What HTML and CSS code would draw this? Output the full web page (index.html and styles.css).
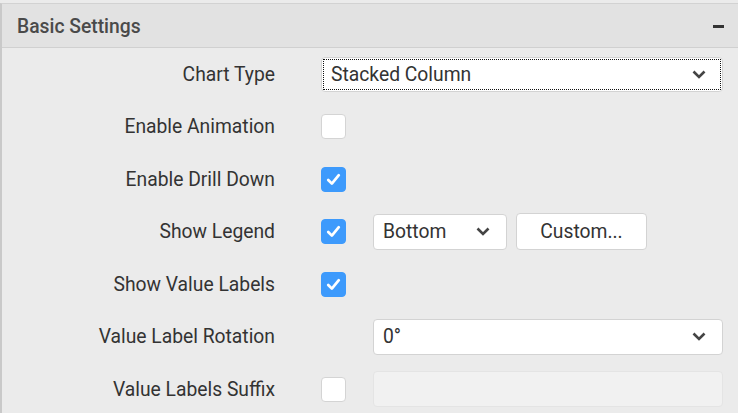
FILE: index.html
```html
<!DOCTYPE html>
<html>
<head>
<meta charset="utf-8">
<link rel="stylesheet" href="styles.css">
</head>
<body>
<div class="panel">
  <div class="panel-header">
    <span class="panel-title">Basic Settings</span>
    <span class="collapse-icon"></span>
  </div>
  <div class="panel-body">
    <div class="label">Chart Type</div>
    <div class="control">
      <div class="select select-wide focused">
        <span>Stacked Column</span>
        <svg class="chev" viewBox="0 0 14 9" width="14" height="9"><path d="M1.5 1.5 L7 7 L12.5 1.5" fill="none" stroke="#444" stroke-width="2.6"/></svg>
      </div>
    </div>

    <div class="label">Enable Animation</div>
    <div class="control"><span class="cb"></span></div>

    <div class="label">Enable Drill Down</div>
    <div class="control"><span class="cb checked"><svg viewBox="0 0 26 26" width="26" height="26"><path d="M7.5 13.5 L11.3 17.3 L18.5 8.5" fill="none" stroke="#fff" stroke-width="2.8" stroke-linecap="round" stroke-linejoin="round"/></svg></span></div>

    <div class="label">Show Legend</div>
    <div class="control">
      <span class="cb checked"><svg viewBox="0 0 26 26" width="26" height="26"><path d="M7.5 13.5 L11.3 17.3 L18.5 8.5" fill="none" stroke="#fff" stroke-width="2.8" stroke-linecap="round" stroke-linejoin="round"/></svg></span>
      <div class="select select-small">
        <span>Bottom</span>
        <svg class="chev" viewBox="0 0 14 9" width="14" height="9"><path d="M1.5 1.5 L7 7 L12.5 1.5" fill="none" stroke="#444" stroke-width="2.6"/></svg>
      </div>
      <button class="btn">Custom...</button>
    </div>

    <div class="label">Show Value Labels</div>
    <div class="control"><span class="cb checked"><svg viewBox="0 0 26 26" width="26" height="26"><path d="M7.5 13.5 L11.3 17.3 L18.5 8.5" fill="none" stroke="#fff" stroke-width="2.8" stroke-linecap="round" stroke-linejoin="round"/></svg></span></div>

    <div class="label">Value Label Rotation</div>
    <div class="control">
      <span class="cb-spacer"></span>
      <div class="select select-fill">
        <span>0°</span>
        <svg class="chev" viewBox="0 0 14 9" width="14" height="9"><path d="M1.5 1.5 L7 7 L12.5 1.5" fill="none" stroke="#444" stroke-width="2.6"/></svg>
      </div>
    </div>

    <div class="label">Value Labels Suffix</div>
    <div class="control">
      <span class="cb"></span>
      <div class="input-disabled"></div>
    </div>
  </div>
</div>
</body>
</html>
```

FILE: styles.css
```css
html, body {
  margin: 0;
  padding: 0;
  background: #ebebeb;
}
body {
  font-family: Roboto, "Liberation Sans", sans-serif;
  width: 738px;
  height: 413px;
  overflow: hidden;
}
.panel {
  margin-top: 3px;
  border-left: 2px solid #c9c9c9;
  border-top: 1px solid #d2d2d2;
  height: 410px;
  box-sizing: border-box;
}
.panel-header {
  height: 43px;
  background: #e2e2e2;
  border-bottom: 1px solid #d0d0d0;
  display: flex;
  align-items: center;
  justify-content: space-between;
  padding: 0 14px 0 15px;
}
.panel-title {
  font-size: 19.3px;
  font-weight: 500;
  color: #4a4a4a;
  padding-top: 1px;
}
.collapse-icon {
  width: 11px;
  height: 3px;
  background: #333;
  margin-top: 1px;
}
.panel-body {
  display: grid;
  grid-template-columns: 273px 1fr;
  grid-auto-rows: 52.5px;
  column-gap: 46px;
  padding-top: 0px;
  padding-right: 15px;
}
.label {
  display: flex;
  align-items: center;
  justify-content: flex-end;
  font-size: 19.3px;
  color: #333;
}
.control {
  display: flex;
  align-items: center;
  gap: 10px;
}
.cb, .cb-spacer {
  width: 25px;
  height: 25px;
  flex: none;
  box-sizing: border-box;
  margin-right: 17px;
}
.cb {
  border: 1px solid #d4d4d4;
  border-radius: 4px;
  background: #fff;
}
.cb.checked {
  background: #3d9afc;
  border-color: #3d9afc;
  position: relative;
}
.cb.checked svg {
  position: absolute;
  left: -1px;
  top: -1px;
  width: 25px;
  height: 25px;
}
.select {
  height: 36px;
  box-sizing: border-box;
  background: #fff;
  border: 1px solid #d3d3d3;
  border-radius: 4px;
  display: flex;
  align-items: center;
  justify-content: space-between;
  padding: 0 16px 0 9px;
  font-size: 19.3px;
  color: #333;
}
.select-wide {
  flex: 1;
  height: 35px;
}
.select-fill {
  flex: 1;
}
.focused {
  position: relative;
}
.focused::after {
  content: "";
  position: absolute;
  inset: 1px;
  border: 1px dotted #111;
  pointer-events: none;
}
.select-small {
  width: 134px;
  padding-right: 16px;
}
.chev {
  flex: none;
}
.btn {
  height: 37px;
  width: 131px;
  background: #fff;
  border: 1px solid #d3d3d3;
  border-radius: 4px;
  font-family: Roboto, "Liberation Sans", sans-serif;
  font-size: 19.3px;
  color: #333;
  padding: 0;
  margin-left: -1px;
}
.input-disabled {
  flex: 1;
  height: 36px;
  box-sizing: border-box;
  background: #f1f1f1;
  border: 1px solid #e4e4e4;
  border-radius: 4px;
}
```
